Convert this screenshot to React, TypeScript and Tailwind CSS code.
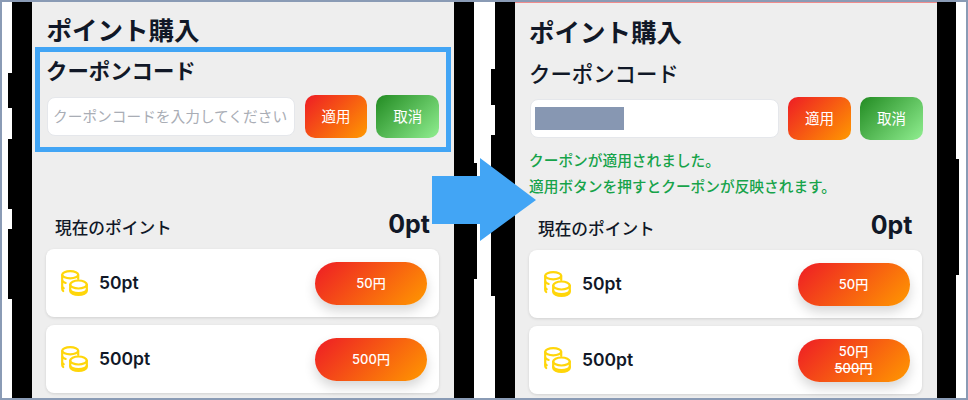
const FONT = "font-['Inter','Noto_Sans_CJK_JP',sans-serif]";
const RED = "bg-[linear-gradient(135deg,#ee1c25,#ff9900)]";
const GREEN = "bg-[linear-gradient(135deg,#228b22,#90ee90)]";

function Coins() {
  return (
    <svg viewBox="0 0 27 27" className="h-[27px] w-[27px] shrink-0" fill="none" stroke="#ffd60a" strokeWidth="2.2" strokeLinecap="round" strokeLinejoin="round">
      <ellipse cx="9.2" cy="4.8" rx="8" ry="3.6" />
      <path d="M1.2 5v5c0 1.3 1.3 2.4 3.5 3" />
      <path d="M1.2 11v5c0 .9.5 1.7 1.5 2.3" />
      <path d="M1.2 17v2c0 .8.4 1.5 1 2" />
      <path d="M17.2 5v4" />
      <ellipse cx="17.5" cy="14.5" rx="8.3" ry="4" />
      <path d="M9.2 14.5v6.5c0 2 3.7 3.9 8.3 3.9s8.3-1.9 8.3-3.9v-6.5" />
      <path d="M9.2 19.5c0 2 3.7 3.7 8.3 3.7s8.3-1.7 8.3-3.7" />
    </svg>
  );
}

function SideButtons({ items }: { items: [number, number][] }) {
  return (
    <div className="flex w-full flex-col">
      {items.map(([mt, h]) => (
        <div key={mt} className="bg-black" style={{ marginTop: mt, height: h }} />
      ))}
    </div>
  );
}

function PointCard({ pt, price, old, top }: { pt: string; price: string; old?: string; top: string }) {
  return (
    <div className={`ml-[14px] mr-[15px] flex h-[68px] items-center justify-between rounded-lg bg-white pl-[15px] pr-[12px] shadow-[0_1px_3px_rgba(0,0,0,0.12)] ${top}`}>
      <div className="flex items-center gap-[11px]">
        <Coins />
        <span className="text-[17.5px] font-semibold text-[#111827]">{pt}</span>
      </div>
      <div className={`flex h-[43px] w-[112px] flex-col items-center justify-center rounded-full text-[13px] font-medium leading-[17px] text-white shadow-[0_6px_12px_rgba(0,0,0,0.16)] ${RED}`}>
        <span>{price}</span>
        {old && <span className="line-through">{old}</span>}
      </div>
    </div>
  );
}

function LeftScreen() {
  return (
    <div className={`h-[396px] w-[422px] shrink-0 overflow-hidden bg-[#eeeeee] ${FONT}`}>
      <h1 className="ml-[14.5px] mt-[13px] text-[25.5px] font-semibold leading-[32px] text-[#111827]">ポイント購入</h1>
      <div className="mx-[3px] h-[105px] border-[5px] border-[#42a5f5] px-[7px]">
        <h2 className="-ml-[1px] mt-[5px] text-[21.4px] font-semibold leading-[28px] text-[#111827]">クーポンコード</h2>
        <div className="mt-[10px] flex items-center">
          <input
            readOnly
            placeholder="クーポンコードを入力してください"
            className="h-[39px] w-[249px] rounded-lg border border-[#e5e7eb] bg-white px-[5px] text-[14.7px] outline-none placeholder:text-[#a9adb5]"
          />
          <div className={`ml-[10px] flex h-[43px] w-[63px] items-center justify-center rounded-[10px] text-[14.5px] text-white ${RED}`}>適用</div>
          <div className={`ml-[9px] flex h-[43px] w-[63px] items-center justify-center rounded-[10px] text-[14.5px] text-white ${GREEN}`}>取消</div>
        </div>
      </div>
      <div className="mt-[52px] flex h-[40px] items-center justify-between pl-[23px] pr-[24px]">
        <span className="mt-[9px] text-[16.7px] font-medium text-[#111827]">現在のポイント</span>
        <span className="mt-[2px] text-[25px] font-bold text-[#111827]">0pt</span>
      </div>
      <PointCard pt="50pt" price="50円" top="mt-[5px]" />
      <PointCard pt="500pt" price="500円" top="mt-[8px]" />
    </div>
  );
}

function RightScreen() {
  return (
    <div className={`h-[396px] w-[421.5px] shrink-0 overflow-hidden border-t border-[#f08c8c] bg-[#eeeeee] ${FONT}`}>
      <h1 className="ml-[14px] mt-[14px] text-[25.5px] font-semibold leading-[32px] text-[#111827]">ポイント購入</h1>
      <h2 className="ml-[14px] mt-[11px] text-[21.4px] font-medium leading-[28px] text-[#111827]">クーポンコード</h2>
      <div className="ml-[15px] mt-[9px] flex items-center">
        <div className="flex h-[39px] w-[249px] items-center rounded-lg border border-[#e5e7eb] bg-white px-[4px]">
          <div className="h-[23px] w-[89px] bg-[#8797b2]" />
        </div>
        <div className={`ml-[9px] flex h-[43px] w-[63px] items-center justify-center rounded-[10px] text-[14.5px] text-white ${RED}`}>適用</div>
        <div className={`ml-[9px] flex h-[43px] w-[63px] items-center justify-center rounded-[10px] text-[14.5px] text-white ${GREEN}`}>取消</div>
      </div>
      <p className="ml-[14px] mt-[8px] text-[14.7px] font-medium leading-[26px] text-[#16a34a]">
        クーポンが適用されました。
        <br />
        適用ボタンを押すとクーポンが反映されます。
      </p>
      <div className="mt-[5px] flex h-[40px] items-center justify-between pl-[23px] pr-[24px]">
        <span className="mt-[9px] text-[16.7px] font-medium text-[#111827]">現在のポイント</span>
        <span className="mt-[2px] text-[25px] font-bold text-[#111827]">0pt</span>
      </div>
      <PointCard pt="50pt" price="50円" top="mt-[5px]" />
      <PointCard pt="500pt" price="50円" old="500円" top="mt-[8px]" />
    </div>
  );
}

export default function App() {
  return (
    <div className="relative flex h-[400px] w-[968px] overflow-hidden border-2 border-[#8a9bb5] bg-white pl-[6px]">
      {/* left phone */}
      <div className="w-[4px] shrink-0">
        <SideButtons items={[[71, 35], [31, 70], [20, 70]]} />
      </div>
      <div className="w-[20px] shrink-0 bg-black" />
      <LeftScreen />
      <div className="w-[20px] shrink-0 bg-black" />
      <div className="w-[2.5px] shrink-0">
        <SideButtons items={[[161, 116]]} />
      </div>

      {/* right phone */}
      <div className="ml-[14.5px] w-[4px] shrink-0">
        <SideButtons items={[[67, 36], [30, 70], [21, 70]]} />
      </div>
      <div className="w-[20px] shrink-0 bg-black" />
      <RightScreen />
      <div className="w-[19.5px] shrink-0 bg-black" />
      <div className="w-[3px] shrink-0">
        <SideButtons items={[[157, 116]]} />
      </div>

      {/* arrow between the two phones */}
      <svg className="absolute left-[430px] top-[156px] h-[83px] w-[104px]" viewBox="0 0 104 83">
        <path d="M0 18H48V0L104 42 48 83V66H0Z" fill="#42a5f5" />
      </svg>
    </div>
  );
}
